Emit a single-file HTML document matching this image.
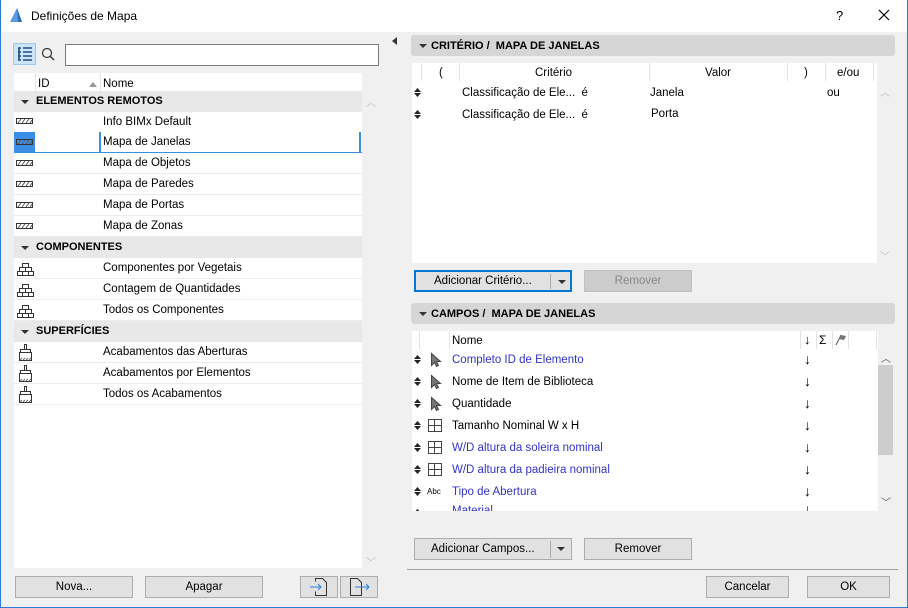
<!DOCTYPE html>
<html><head><meta charset="utf-8"><style>
*{box-sizing:border-box;margin:0;padding:0}
body{width:908px;height:608px;overflow:hidden;background:#f0f0f0;font-family:"Liberation Sans",sans-serif;font-size:11.5px;color:#000;position:relative}
.a{position:absolute}
.win{left:0;top:0;width:908px;height:608px;border:1px solid #2b7ad6;border-top:none}
.title{left:0;top:0;width:908px;height:32px;background:#fff}
.btn{position:absolute;background:#e1e1e1;border:1px solid #adadad;text-align:center;line-height:21px;font-size:11.5px}
.row{position:absolute;left:14px;width:348px;height:21px;background:#fff;border-bottom:1px solid #ececec;line-height:21px}
.grp{position:absolute;left:14px;width:348px;height:21px;background:#e8e8e8;font-weight:bold;line-height:21px;font-size:11px}
.grp span{position:absolute;left:22px}
.tri{position:absolute;left:7px;top:9px;width:0;height:0;border-left:4px solid transparent;border-right:4px solid transparent;border-top:4px solid #333}
.nm{position:absolute;left:89px}
.hbar{position:absolute;left:411px;width:484px;height:21px;background:#d6d6d6;border-radius:3px;font-weight:bold;line-height:22px;font-size:11px}
.hbar span{position:absolute;left:20px}
.hbar .tri{left:8px;top:9px}
.ud{position:absolute;left:414px;width:7px;height:9px}
.fr{position:absolute;left:452px;height:22px;line-height:22px}
.blue{color:#3333cc}
.arr{position:absolute;left:804px;font-size:14px}
</style></head><body>
<div class="a title"></div>
<svg class="a" style="left:8px;top:7px" width="16" height="16"><path d="M2 15 L9 1 L14 15 Z" fill="#5b9be0"/><path d="M9 1 L14 15 L10 15 Z" fill="#2a6fc0"/></svg>
<div class="a" style="left:31px;top:9px;font-size:12px">Definições de Mapa</div>
<div class="a" style="left:836px;top:8px;font-size:13px">?</div>
<svg class="a" style="left:878px;top:9px" width="12" height="12"><path d="M1 1L11 11M11 1L1 11" stroke="#000" stroke-width="1.2"/></svg>

<div class="a" style="left:13px;top:43px;width:23px;height:22px;background:#cce4f7;border:1px solid #99c9ef"></div>
<svg class="a" style="left:17px;top:47px" width="16" height="14"><path d="M1 1h3M1 5h3M1 9h3M1 13h3M2 1v12M6 1h9M6 5h9M6 9h9M6 13h9" stroke="#1e4a80" stroke-width="1.6"/></svg>
<svg class="a" style="left:41px;top:47px" width="14" height="14"><circle cx="6" cy="6" r="4.5" fill="none" stroke="#333" stroke-width="1.2"/><path d="M9 9l4 4" stroke="#333" stroke-width="1.4"/></svg>
<div class="a" style="left:65px;top:44px;width:314px;height:22px;background:#fff;border:1px solid #7a7a7a"></div>

<div class="a" style="left:14px;top:73px;width:348px;height:495px;background:#fff"></div>
<div class="a" style="left:35px;top:73px;width:1px;height:18px;background:#e5e5e5"></div>
<div class="a" style="left:100px;top:73px;width:1px;height:18px;background:#e5e5e5"></div>
<div class="a" style="left:38px;top:78px;font-size:11.5px">ID</div>
<div class="a" style="left:89px;top:82px;border-left:4px solid transparent;border-right:4px solid transparent;border-bottom:5px solid #999"></div>
<div class="a" style="left:103px;top:78px">Nome</div>

<div class="grp" style="top:91px"><div class="tri"></div><span>ELEMENTOS REMOTOS</span></div>
<div class="row" style="top:112px"><span class="nm">Info BIMx Default</span></div>
<div class="row" style="top:132px;border-bottom:1px solid #3a8ee6"><div class="a" style="left:0;top:0;width:21px;height:20px;background:#3a8ee6"></div><div class="a" style="left:85px;top:0;width:2px;height:20px;background:#3a8ee6"></div><div class="a" style="left:345px;top:0;width:2px;height:20px;background:#3a8ee6"></div><span class="nm">Mapa de Janelas</span></div>
<div class="row" style="top:153px"><span class="nm">Mapa de Objetos</span></div>
<div class="row" style="top:174px"><span class="nm">Mapa de Paredes</span></div>
<div class="row" style="top:195px"><span class="nm">Mapa de Portas</span></div>
<div class="row" style="top:216px"><span class="nm">Mapa de Zonas</span></div>
<svg class="a" style="left:16px;top:118px" width="18" height="120">
<g fill="none" stroke="#333"><rect x="0.5" y="0.5" width="16" height="5"/><rect x="0.5" y="21.5" width="16" height="5"/><rect x="0.5" y="42.5" width="16" height="5"/><rect x="0.5" y="63.5" width="16" height="5"/><rect x="0.5" y="84.5" width="16" height="5"/><rect x="0.5" y="105.5" width="16" height="5"/></g>
<g stroke="#555"><path d="M2 5l3-4M6 5l3-4M10 5l3-4M14 5l2-3M2 26l3-4M6 26l3-4M10 26l3-4M14 26l2-3M2 47l3-4M6 47l3-4M10 47l3-4M14 47l2-3M2 68l3-4M6 68l3-4M10 68l3-4M14 68l2-3M2 89l3-4M6 89l3-4M10 89l3-4M14 89l2-3M2 110l3-4M6 110l3-4M10 110l3-4M14 110l2-3"/></g></svg>

<div class="grp" style="top:237px"><div class="tri"></div><span>COMPONENTES</span></div>
<div class="row" style="top:258px"><span class="nm">Componentes por Vegetais</span></div>
<div class="row" style="top:279px"><span class="nm">Contagem de Quantidades</span></div>
<div class="row" style="top:300px"><span class="nm">Todos os Componentes</span></div>
<svg class="a" style="left:17px;top:262px" width="18" height="60"><g fill="none" stroke="#333"><path d="M5.5 1.5h6v4h-6zM2.5 5.5h12v4h-12zM0.5 9.5h16v4h-16zM8.5 5.5v4M5.5 9.5v4M11.5 9.5v4"/><path transform="translate(0,21)" d="M5.5 1.5h6v4h-6zM2.5 5.5h12v4h-12zM0.5 9.5h16v4h-16zM8.5 5.5v4M5.5 9.5v4M11.5 9.5v4"/><path transform="translate(0,42)" d="M5.5 1.5h6v4h-6zM2.5 5.5h12v4h-12zM0.5 9.5h16v4h-16zM8.5 5.5v4M5.5 9.5v4M11.5 9.5v4"/></g></svg>

<div class="grp" style="top:321px"><div class="tri"></div><span>SUPERFÍCIES</span></div>
<div class="row" style="top:342px"><span class="nm">Acabamentos das Aberturas</span></div>
<div class="row" style="top:363px"><span class="nm">Acabamentos por Elementos</span></div>
<div class="row" style="top:384px"><span class="nm">Todos os Acabamentos</span></div>
<svg class="a" style="left:17px;top:344px" width="18" height="62"><g fill="none" stroke="#333"><path d="M7.5 0.5v5h2v-5zM3.5 5.5h10v3h-10zM2.5 8.5h12v8h-12z"/><path transform="translate(0,21)" d="M7.5 0.5v5h2v-5zM3.5 5.5h10v3h-10zM2.5 8.5h12v8h-12z"/><path transform="translate(0,42)" d="M7.5 0.5v5h2v-5zM3.5 5.5h10v3h-10zM2.5 8.5h12v8h-12z"/></g><g stroke="#666"><path d="M3 16l2-2M6 16l2-2M9 16l2-2M12 16l2-2M3 37l2-2M6 37l2-2M9 37l2-2M12 37l2-2M3 58l2-2M6 58l2-2M9 58l2-2M12 58l2-2"/></g></svg>

<div class="a" style="left:366px;top:94px;color:#bbb;font-size:10px">︿</div>
<div class="a" style="left:366px;top:554px;color:#bbb;font-size:10px">﹀</div>

<div class="btn" style="left:15px;top:576px;width:118px;height:22px">Nova...</div>
<div class="btn" style="left:145px;top:576px;width:118px;height:22px">Apagar</div>
<div class="btn" style="left:300px;top:576px;width:38px;height:22px"></div>
<div class="btn" style="left:340px;top:576px;width:38px;height:22px"></div>
<svg class="a" style="left:309px;top:578px" width="22" height="18"><path d="M6.5 3.5v-3h7l4 4v13h-11v-4" fill="none" stroke="#333"/><path d="M1 9h11M9 6l3 3-3 3" fill="none" stroke="#2a7de1"/></svg>
<svg class="a" style="left:349px;top:578px" width="24" height="18"><path d="M1.5 0.5h7l4 4v13h-11z" fill="none" stroke="#333"/><path d="M6 9h14M17 6l3 3-3 3" fill="none" stroke="#2a7de1"/></svg>

<div class="a" style="left:392px;top:37px;border-top:4px solid transparent;border-bottom:4px solid transparent;border-right:5px solid #333"></div>

<div class="hbar" style="top:35px"><div class="tri"></div><span>CRITÉRIO / &nbsp;MAPA DE JANELAS</span></div>
<div class="a" style="left:412px;top:63px;width:465px;height:200px;background:#fff"></div>
<div class="a" style="left:421px;top:63px;width:1px;height:18px;background:#e3e3e3"></div>
<div class="a" style="left:459px;top:63px;width:1px;height:18px;background:#e3e3e3"></div>
<div class="a" style="left:649px;top:63px;width:1px;height:18px;background:#e3e3e3"></div>
<div class="a" style="left:787px;top:63px;width:1px;height:18px;background:#e3e3e3"></div>
<div class="a" style="left:825px;top:63px;width:1px;height:18px;background:#e3e3e3"></div>
<div class="a" style="left:873px;top:63px;width:1px;height:18px;background:#e3e3e3"></div>
<div class="a" style="left:439px;top:67px">(</div>
<div class="a" style="left:535px;top:67px">Critério</div>
<div class="a" style="left:705px;top:67px">Valor</div>
<div class="a" style="left:804px;top:67px">)</div>
<div class="a" style="left:837px;top:67px">e/ou</div>
<svg class="ud" style="top:88px"><path d="M0 4L3.5 0 7 4zM0 5h7L3.5 9z" fill="#222"/></svg>
<div class="a" style="left:462px;top:87px">Classificação de Ele...&nbsp; é</div>
<div class="a" style="left:650px;top:87px">Janela</div>
<div class="a" style="left:827px;top:87px">ou</div>
<svg class="ud" style="top:110px"><path d="M0 4L3.5 0 7 4zM0 5h7L3.5 9z" fill="#222"/></svg>
<div class="a" style="left:462px;top:109px">Classificação de Ele...&nbsp; é</div>
<div class="a" style="left:651px;top:108px">Porta</div>
<div class="a" style="left:880px;top:84px;color:#bbb;font-size:10px">︿</div>
<div class="a" style="left:880px;top:248px;color:#bbb;font-size:10px">﹀</div>
<div class="btn" style="left:414px;top:270px;width:158px;height:22px;border:2px solid #0078d7;line-height:19px"><span style="position:absolute;left:18px">Adicionar Critério...</span><div class="a" style="left:134px;top:2px;width:1px;height:15px;background:#aaa"></div><div class="a" style="left:142px;top:8px;border-left:4px solid transparent;border-right:4px solid transparent;border-top:4px solid #333"></div></div>
<div class="btn" style="left:584px;top:270px;width:108px;height:22px;background:#ccc;border-color:#bfbfbf;color:#888">Remover</div>

<div class="hbar" style="top:303px"><div class="tri"></div><span>CAMPOS / &nbsp;MAPA DE JANELAS</span></div>
<div class="a" style="left:412px;top:331px;width:466px;height:180px;background:#fff;overflow:hidden">
<div class="a" style="left:40px;top:174px;color:#3333cc">Material</div>
<svg class="a" style="left:2px;top:178px" width="7" height="9"><path d="M0 4L3.5 0 7 4z" fill="#222"/></svg>
<div class="a" style="left:392px;top:170px;font-size:14px">↓</div>
</div>
<div class="a" style="left:419px;top:331px;width:1px;height:18px;background:#e3e3e3"></div>
<div class="a" style="left:449px;top:331px;width:1px;height:18px;background:#e3e3e3"></div>
<div class="a" style="left:800px;top:331px;width:1px;height:18px;background:#e3e3e3"></div>
<div class="a" style="left:816px;top:331px;width:1px;height:18px;background:#e3e3e3"></div>
<div class="a" style="left:832px;top:331px;width:1px;height:18px;background:#e3e3e3"></div>
<div class="a" style="left:848px;top:331px;width:1px;height:18px;background:#e3e3e3"></div>
<div class="a" style="left:876px;top:331px;width:1px;height:18px;background:#e3e3e3"></div>
<div class="a" style="left:452px;top:335px">Nome</div>
<div class="a" style="left:804px;top:332px;font-size:13px">↓</div>
<div class="a" style="left:819px;top:333px;font-size:12px">Σ</div>
<svg class="a" style="left:835px;top:333px" width="12" height="13"><path d="M1 12L6 2" stroke="#555"/><path d="M6 2l5 1-2 4-5-1z" fill="#777"/></svg>

<svg class="ud" style="top:355px"><path d="M0 4L3.5 0 7 4zM0 5h7L3.5 9z" fill="#222"/></svg><div class="fr blue" style="top:349px">Completo ID de Elemento</div><div class="arr" style="top:351px">↓</div>
<svg class="ud" style="top:377px"><path d="M0 4L3.5 0 7 4zM0 5h7L3.5 9z" fill="#222"/></svg><div class="fr" style="top:371px">Nome de Item de Biblioteca</div><div class="arr" style="top:373px">↓</div>
<svg class="ud" style="top:399px"><path d="M0 4L3.5 0 7 4zM0 5h7L3.5 9z" fill="#222"/></svg><div class="fr" style="top:393px">Quantidade</div><div class="arr" style="top:395px">↓</div>
<svg class="ud" style="top:421px"><path d="M0 4L3.5 0 7 4zM0 5h7L3.5 9z" fill="#222"/></svg><div class="fr" style="top:415px">Tamanho Nominal W x H</div><div class="arr" style="top:417px">↓</div>
<svg class="ud" style="top:443px"><path d="M0 4L3.5 0 7 4zM0 5h7L3.5 9z" fill="#222"/></svg><div class="fr blue" style="top:437px">W/D altura da soleira nominal</div><div class="arr" style="top:439px">↓</div>
<svg class="ud" style="top:465px"><path d="M0 4L3.5 0 7 4zM0 5h7L3.5 9z" fill="#222"/></svg><div class="fr blue" style="top:459px">W/D altura da padieira nominal</div><div class="arr" style="top:461px">↓</div>
<svg class="ud" style="top:487px"><path d="M0 4L3.5 0 7 4zM0 5h7L3.5 9z" fill="#222"/></svg><div class="fr blue" style="top:481px">Tipo de Abertura</div><div class="arr" style="top:483px">↓</div>
<div class="a" style="left:427px;top:487px;font-size:8px">Abc</div>
<svg class="a" style="left:429px;top:352px" width="14" height="62"><g fill="#777" stroke="#444"><path d="M2.5 1.5v12l3-3 2 4 2-1-2-4h4z"/><path transform="translate(0,22)" d="M2.5 1.5v12l3-3 2 4 2-1-2-4h4z"/><path transform="translate(0,44)" d="M2.5 1.5v12l3-3 2 4 2-1-2-4h4z"/></g></svg>
<svg class="a" style="left:427px;top:418px" width="16" height="60"><g fill="none" stroke="#444"><path d="M1.5 1.5h13v12h-13zM1.5 7.5h13M7.5 1.5v12"/><path transform="translate(0,22)" d="M1.5 1.5h13v12h-13zM1.5 7.5h13M7.5 1.5v12"/><path transform="translate(0,44)" d="M1.5 1.5h13v12h-13zM1.5 7.5h13M7.5 1.5v12"/></g></svg>
<div class="a" style="left:878px;top:349px;width:15px;height:162px;background:#f0f0f0"></div>
<div class="a" style="left:878px;top:365px;width:15px;height:90px;background:#cdcdcd"></div>
<div class="a" style="left:881px;top:350px;font-size:10px;color:#555">︿</div>
<div class="a" style="left:881px;top:494px;font-size:10px;color:#555">﹀</div>

<div class="btn" style="left:414px;top:538px;width:158px;height:22px"><span style="position:absolute;left:16px">Adicionar Campos...</span><div class="a" style="left:135px;top:2px;width:1px;height:17px;background:#aaa"></div><div class="a" style="left:142px;top:8px;border-left:4px solid transparent;border-right:4px solid transparent;border-top:4px solid #333"></div></div>
<div class="btn" style="left:584px;top:538px;width:108px;height:22px">Remover</div>
<div class="a" style="left:407px;top:569px;width:491px;height:1px;background:#a0a0a0"></div>
<div class="btn" style="left:706px;top:576px;width:83px;height:22px">Cancelar</div>
<div class="btn" style="left:807px;top:576px;width:83px;height:22px">OK</div>
<div class="a win"></div>
</body></html>
